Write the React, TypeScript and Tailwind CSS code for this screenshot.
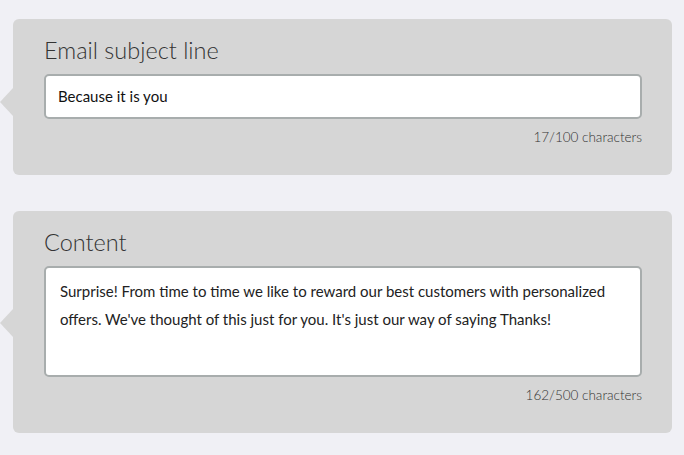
const font = { fontFamily: 'Lato, "Noto Sans", sans-serif' };

function Arrow({ top }: { top: string }) {
  return (
    <div
      className={`absolute -left-[13px] ${top} w-0 h-0 border-y-[14px] border-y-transparent border-r-[13px] border-r-[#d6d6d6]`}
    />
  );
}

function Field({
  label,
  value,
  count,
  multiline,
  arrowTop,
}: {
  label: string;
  value: string;
  count: string;
  multiline?: boolean;
  arrowTop: string;
}) {
  return (
    <section className="relative rounded-md bg-[#d6d6d6] pl-[31px] pr-[30px] pt-[15px] pb-[29px]">
      <Arrow top={arrowTop} />
      <h2 className="text-[23.5px] leading-[32px] font-light text-[#333] mb-2">{label}</h2>
      {multiline ? (
        <textarea
          readOnly
          value={value}
          className="block w-full h-[111px] resize-none rounded-[5px] border-2 border-[#a8adad] bg-white px-[14px] py-[9px] text-[15px] leading-[28px] text-[#222] outline-none"
          style={font}
        />
      ) : (
        <input
          readOnly
          value={value}
          className="block w-full h-[45px] rounded-[5px] border-2 border-[#a8adad] bg-white px-3 pb-px text-[15px] text-[#111] outline-none"
          style={font}
        />
      )}
      <p className="mt-[9px] text-right text-[13.5px] leading-[18px] font-light text-[#333]">{count}</p>
    </section>
  );
}

export default function App() {
  return (
    <div className="min-h-screen bg-[#f0f0f5] pl-[13px] pr-[12px] pt-[19px] pb-5" style={font}>
      <div className="flex flex-col gap-9">
        <Field
          label="Email subject line"
          value="Because it is you"
          count="17/100 characters"
          arrowTop="top-[69px]"
        />
        <Field
          label="Content"
          value="Surprise! From time to time we like to reward our best customers with personalized offers. We've thought of this just for you. It's just our way of saying Thanks!"
          count="162/500 characters"
          multiline
          arrowTop="top-[98px]"
        />
      </div>
    </div>
  );
}
